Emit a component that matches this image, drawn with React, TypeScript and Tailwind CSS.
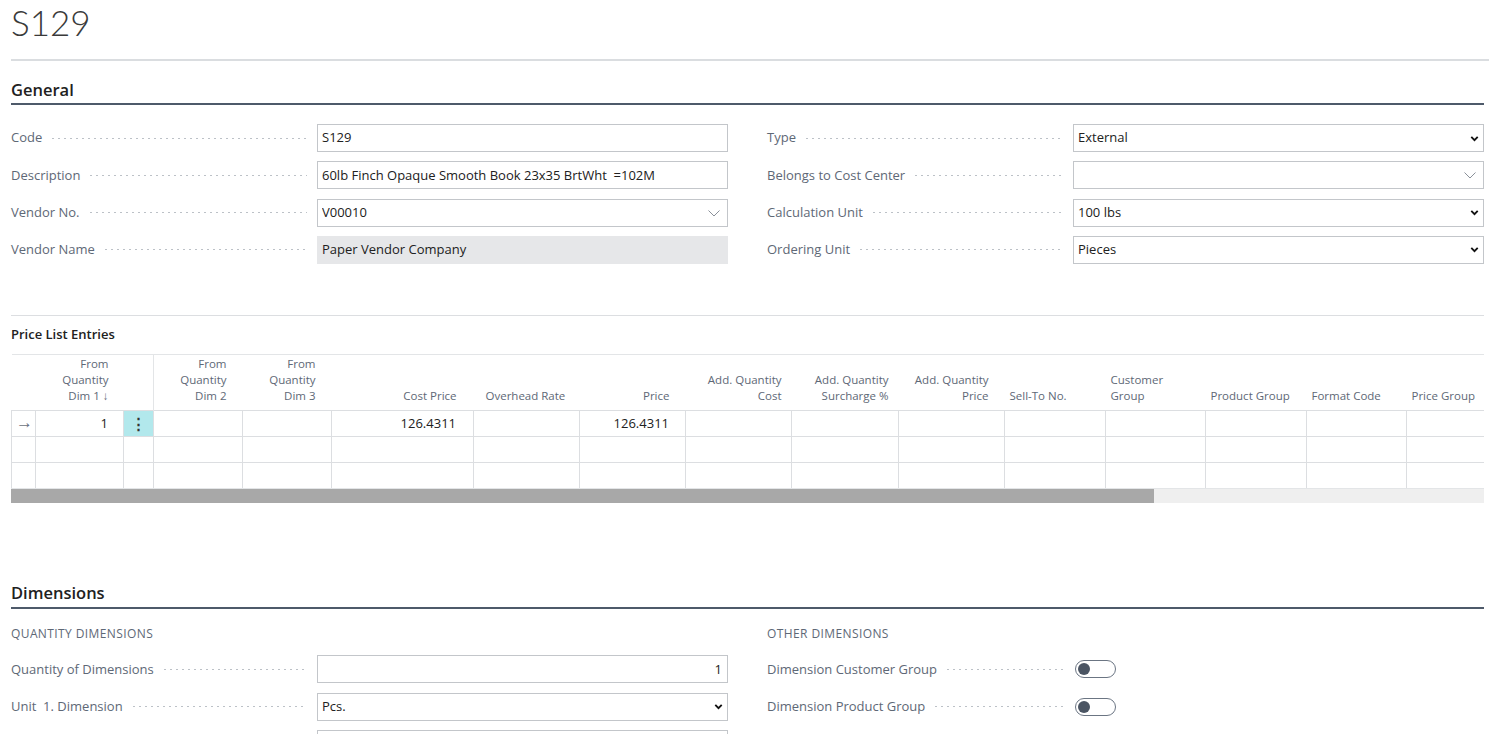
import React from 'react'

const SANS = "font-['Open_Sans','Noto_Sans',sans-serif]"

function Dots() {
  return (
    <span className="mx-[8px] h-[3px] flex-1 bg-[radial-gradient(circle,#bcc1c7_0.8px,transparent_1.1px)] bg-[length:6px_3px] bg-repeat-x" />
  )
}

function Chevron({ bold }: { bold?: boolean }) {
  if (bold) {
    return (
      <svg width="11" height="11" viewBox="0 0 12 12">
        <path d="M2.5 4.2 6 7.8 9.5 4.2" fill="none" stroke="#111" strokeWidth="2" />
      </svg>
    )
  }
  return (
    <svg width="14" height="14" viewBox="0 0 14 14" className="mr-[3px]">
      <path d="M1.5 4.5 7 10l5.5-5.5" fill="none" stroke="#8a9099" strokeWidth="1" />
    </svg>
  )
}

type FieldKind = 'text' | 'lookup' | 'select' | 'readonly' | 'number'

function Field({ label, value = '', kind = 'text' }: { label: string; value?: string; kind?: FieldKind }) {
  const box =
    kind === 'readonly'
      ? 'bg-[#e6e7e9] border border-[#e6e7e9]'
      : 'bg-white border border-[#c3c6ca]'
  return (
    <div className="flex h-[28px] items-center">
      <div className="flex w-[306px] items-center pr-[2px]">
        <span className="whitespace-pre text-[13px] text-[#5e6876]">{label}</span>
        <Dots />
      </div>
      <div className={`flex h-[28px] flex-1 items-center pl-[4px] pr-[3px] ${box}`}>
        <span
          className={`flex-1 truncate whitespace-pre text-[13px] text-[#212121] ${
            kind === 'number' ? 'pr-[2px] text-right' : ''
          }`}
        >
          {value}
        </span>
        {kind === 'lookup' && <Chevron />}
        {kind === 'select' && <Chevron bold />}
      </div>
    </div>
  )
}

function Toggle() {
  return (
    <span className="ml-[2px] flex h-[18px] w-[41px] items-center rounded-full border border-[#6b7583] px-[2px]">
      <span className="h-[12px] w-[12px] rounded-full bg-[#4b5563]" />
    </span>
  )
}

function ToggleRow({ label }: { label: string }) {
  return (
    <div className="flex h-[28px] items-center">
      <div className="flex w-[306px] items-center pr-[2px]">
        <span className="text-[13px] text-[#5e6876]">{label}</span>
        <Dots />
      </div>
      <Toggle />
    </div>
  )
}

interface Col {
  w: number
  head: string[]
  align: 'left' | 'right'
  pad: string
}

const COLS: Col[] = [
  { w: 24, head: [], align: 'left', pad: '' },
  { w: 88, head: ['From', 'Quantity', 'Dim 1 ↓'], align: 'right', pad: 'pr-[15px]' },
  { w: 30, head: [], align: 'left', pad: '' },
  { w: 89, head: ['From', 'Quantity', 'Dim 2'], align: 'right', pad: 'pr-[16px]' },
  { w: 89, head: ['From', 'Quantity', 'Dim 3'], align: 'right', pad: 'pr-[16px]' },
  { w: 142, head: ['Cost Price'], align: 'right', pad: 'pr-[17px]' },
  { w: 106, head: ['Overhead Rate'], align: 'left', pad: 'pl-[12px]' },
  { w: 106, head: ['Price'], align: 'right', pad: 'pr-[16px]' },
  { w: 106, head: ['Add. Quantity', 'Cost'], align: 'right', pad: 'pr-[10px]' },
  { w: 107, head: ['Add. Quantity', 'Surcharge %'], align: 'right', pad: 'pr-[10px]' },
  { w: 106, head: ['Add. Quantity', 'Price'], align: 'right', pad: 'pr-[16px]' },
  { w: 101, head: ['Sell-To No.'], align: 'left', pad: 'pl-[5px]' },
  { w: 100, head: ['Customer', 'Group'], align: 'left', pad: 'pl-[5px]' },
  { w: 101, head: ['Product Group'], align: 'left', pad: 'pl-[5px]' },
  { w: 100, head: ['Format Code'], align: 'left', pad: 'pl-[5px]' },
  { w: 78, head: ['Price Group'], align: 'left', pad: 'pl-[5px]' },
]

function PriceTable() {
  const rows = [
    { first: true, cells: { 1: '1', 5: '126.4311', 7: '126.4311' } as Record<number, string> },
    { first: false, cells: {} as Record<number, string> },
    { first: false, cells: {} as Record<number, string> },
  ]
  return (
    <div className="overflow-hidden">
      <table className="table-fixed border-collapse" style={{ width: COLS.reduce((s, c) => s + c.w, 0) }}>
        <colgroup>
          {COLS.map((c, i) => (
            <col key={i} style={{ width: c.w }} />
          ))}
        </colgroup>
        <thead>
          <tr className="h-[56px] border-t border-[#e3e5e7]">
            {COLS.map((c, i) => (
              <th
                key={i}
                className={`pb-[6px] align-bottom text-[11.5px] font-normal leading-[16px] text-[#5e6876] ${c.pad} ${
                  c.align === 'right' ? 'text-right' : 'text-left'
                } ${i === 3 ? 'border-l border-[#e3e5e7]' : ''}`}
              >
                {c.head.map((h, k) => (
                  <div key={k} className="whitespace-nowrap">
                    {h}
                  </div>
                ))}
              </th>
            ))}
          </tr>
        </thead>
        <tbody>
          {rows.map((r, ri) => (
            <tr key={ri} className="h-[26px] border-t border-[#dcdee1]">
              {COLS.map((c, i) => {
                let content: React.ReactNode = r.cells[i] ?? ''
                let extra = ''
                if (r.first && i === 0) {
                  content = <span className="pl-[4px] text-[17px] leading-none text-[#6b7280]">→</span>
                }
                if (r.first && i === 2) {
                  content = <span className="block text-center text-[15px] font-bold leading-none text-[#333]">⋮</span>
                  extra = 'bg-[#b2e8ec]'
                }
                return (
                  <td
                    key={i}
                    className={`border-l border-[#dcdee1] p-0 text-[13px] text-[#212121] ${extra} ${
                      c.align === 'right' ? `text-right ${c.pad}` : ''
                    }`}
                  >
                    {content}
                  </td>
                )
              })}
            </tr>
          ))}
        </tbody>
      </table>
      <div className="flex h-[15px] border-t border-[#e3e5e7] bg-[#efefef]">
        <div className="w-[1143px] bg-[#a8a8a8]" />
      </div>
    </div>
  )
}

export default function App() {
  return (
    <div className={`min-h-[734px] bg-white pl-[11px] pr-[5px] ${SANS}`}>
      <h1 className="h-[59px] font-['Lato',sans-serif] text-[35px] leading-[44px] font-light text-[#3a3a3a]">S129</h1>
      <div className="-mr-[5px] h-[2px] bg-[#dadde0]" />

      <div className="flex h-[42px] items-end pb-[2px]">
        <h2 className="text-[16.5px] leading-[22px] font-semibold text-[#212121]">General</h2>
      </div>
      <div className="h-[2px] bg-[#4e5a6a]" />

      <div className="mt-[19px] grid grid-cols-2 gap-x-[39px]">
        <div className="flex flex-col gap-[9.3px]">
          <Field label="Code" value="S129" />
          <Field label="Description" value="60lb Finch Opaque Smooth Book 23x35 BrtWht  =102M" />
          <Field label="Vendor No." value="V00010" kind="lookup" />
          <Field label="Vendor Name" value="Paper Vendor Company" kind="readonly" />
        </div>
        <div className="flex flex-col gap-[9.3px]">
          <Field label="Type" value="External" kind="select" />
          <Field label="Belongs to Cost Center" kind="lookup" />
          <Field label="Calculation Unit" value="100 lbs" kind="select" />
          <Field label="Ordering Unit" value="Pieces" kind="select" />
        </div>
      </div>

      <div className="mt-[51px] h-px bg-[#dcdee1]" />
      <div className="flex h-[38px] items-center">
        <h3 className="text-[13px] font-semibold text-[#212121]">Price List Entries</h3>
      </div>
      <PriceTable />

      <div className="flex h-[104px] items-end pb-[3px]">
        <h2 className="text-[16.5px] leading-[22px] font-semibold text-[#212121]">Dimensions</h2>
      </div>
      <div className="h-[2px] bg-[#4e5a6a]" />

      <div className="mt-[16px] grid grid-cols-2 gap-x-[39px]">
        <div className="flex flex-col">
          <div className="mb-[12px] text-[12px] leading-[18px] tracking-[0.4px] text-[#5e6876]">QUANTITY DIMENSIONS</div>
          <div className="flex flex-col gap-[9.3px]">
            <Field label="Quantity of Dimensions" value="1" kind="number" />
            <Field label="Unit  1. Dimension" value="Pcs." kind="select" />
            <Field label="" value="" />
          </div>
        </div>
        <div className="flex flex-col">
          <div className="mb-[12px] text-[12px] leading-[18px] tracking-[0.4px] text-[#5e6876]">OTHER DIMENSIONS</div>
          <div className="flex flex-col gap-[9.3px]">
            <ToggleRow label="Dimension Customer Group" />
            <ToggleRow label="Dimension Product Group" />
          </div>
        </div>
      </div>
    </div>
  )
}
